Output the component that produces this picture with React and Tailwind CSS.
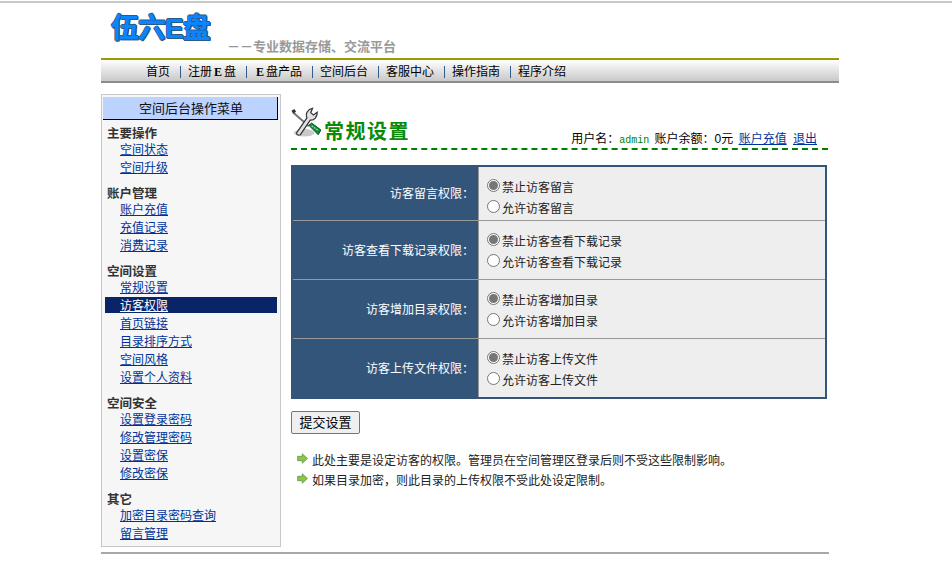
const cjk = "font-['Liberation_Sans','Noto_Sans_CJK_SC',sans-serif]";

const nav = ["首页", "注册E盘", "E盘产品", "空间后台", "客服中心", "操作指南", "程序介绍"];
const menu = [
  ["主要操作", ["空间状态", "空间升级"]],
  ["账户管理", ["账户充值", "充值记录", "消费记录"]],
  ["空间设置", ["常规设置", "访客权限", "首页链接", "目录排序方式", "空间风格", "设置个人资料"]],
  ["空间安全", ["设置登录密码", "修改管理密码", "设置密保", "修改密保"]],
  ["其它", ["加密目录密码查询", "留言管理"]],
];
const rows = [
  ["访客留言权限：", "访客留言", "h-[53px]", "pt-[9px]", ""],
  ["访客查看下载记录权限：", "访客查看下载记录", "h-[59px]", "pt-[5px]", "pt-[2px]"],
  ["访客增加目录权限：", "访客增加目录", "h-[59px]", "pt-[5px]", "pt-[2px]"],
  ["访客上传文件权限：", "访客上传文件", "h-[59px]", "pt-[5px]", "pt-[2px]"],
];

function NavLabel({ t }) {
  return t.split("E").map((p, i) => (
    <span key={i}>
      {i > 0 && <b className="inline-block w-[12px] text-center font-['Liberation_Serif'] font-bold">E</b>}
      {p}
    </span>
  ));
}

function Radio({ on }) {
  return (
    <span className="w-[13px] h-[13px] rounded-full border border-[#767676] bg-white flex items-center justify-center shrink-0 mr-[2px] -mt-[5px]">
      {on && <span className="w-[9px] h-[9px] rounded-full bg-[#767676]" />}
    </span>
  );
}

function Tool() {
  return (
    <svg width="30" height="31" viewBox="0 0 32 32" className="shrink-0 mb-[6px]">
      <ellipse cx="14" cy="27" rx="11" ry="4" fill="#c9c9c9" />
      <path d="M2 5 L19 20" stroke="#777" strokeWidth="2.2" />
      <path d="M0.5 3.5l3-2 2 3-3 2z" fill="#333" />
      <path d="M6 27 L17 11 C15 6 18 2 23 1 L21 5.5 L24 8 L28 5 C28 10 25 14 20.5 13.5 L10 29 C8 30 5.5 29 6 27 Z" fill="#e2e2e2" stroke="#333" strokeWidth="1.3" />
      <path d="M19 19 L22 16.5 L32 24 L29 29 Z" fill="#138a3a" stroke="#0a4d1c" strokeWidth="1" />
      <path d="M22 19.5l7 5" stroke="#9fe8b0" strokeWidth="1.2" strokeDasharray="2 1" />
    </svg>
  );
}

function Arrow() {
  return (
    <svg width="11" height="11" viewBox="0 0 11 11" className="shrink-0 -mt-[5px]">
      <path d="M0.7 3.3h4.6V0.8L10.4 5.5 5.3 10.2V7.7H0.7z" fill="#8fc63f" stroke="#5f8f55" strokeWidth="0.8" />
    </svg>
  );
}

export default function App() {
  return (
    <div className={`h-[567px] w-[952px] overflow-hidden bg-white text-[12px] text-[#222] ${cjk}`}>
      <div className="h-[3px] border-t-2 border-[#c8c8c8] mt-[1px]" />
      <div className="w-[738px] ml-[101px]">
        <div className="h-[54px] flex items-start pl-[10px]">
          <div className="text-[28px] leading-[36px] font-bold text-[#0a84ff] mt-[7px] w-[116px] whitespace-nowrap tracking-[-1px] [text-shadow:1px_1px_0_#2b5a85,-1px_0_0_#2b5a85,0_-1px_0_#2b5a85,1px_0_0_#2b5a85,0_1px_0_#2b5a85]">
            伍六E盘
          </div>
          <div className="mt-[35px] text-[13px] leading-[16px] font-bold text-[#999] whitespace-nowrap">－－专业数据存储、交流平台</div>
        </div>
        <div className="h-[25px] pt-[3px] border-t-2 border-b-2 border-t-[#999900] border-b-[#8c8c8c] bg-gradient-to-b from-white to-[#c9c9c9] flex items-center pl-[45px]">
          {nav.map((n, i) => (
            <div key={n} className="flex items-center">
              {i > 0 && <span className="w-px h-[12px] bg-[#2f5d8c] ml-[10px] mr-[7px]" />}
              <span className="text-black whitespace-nowrap"><NavLabel t={n} /></span>
            </div>
          ))}
        </div>
      </div>

      <div className="flex ml-[101px] mt-[11px]">
        <aside className="w-[180px] h-[453px] border border-[#c8c8c8] bg-[#f6f6f6] pt-[2px] pl-[1px] shrink-0">
          <div className="w-[175px] h-[23px] border-r border-b border-black bg-[#bcd2ff] text-center text-[#111] text-[13px] leading-[24px] pl-[2px]">空间后台操作菜单</div>
          <div className="pt-[6px]">
            {menu.map(([h, items]) => (
              <div key={h} className="mb-[9px]">
                <div className="pl-[4px] h-[15px] font-bold text-[#333] leading-[16px] text-[12.5px]">{h}</div>
                {items.map((it) => (
                  <div key={it} className="h-[18px]">
                    <div className={`h-[16px] leading-[18px] pl-[15px] w-[172px] ml-[2px] ${it === "访客权限" ? "bg-[#0a2468]" : ""}`}>
                      <a className={`underline ${it === "访客权限" ? "text-white" : "text-[#003399]"}`}>{it}</a>
                    </div>
                  </div>
                ))}
              </div>
            ))}
          </div>
        </aside>

        <main className="ml-[10px] w-[538px]">
          <div className="h-[56px] w-[537px] border-b-2 border-dashed border-[#008000] flex items-end">
            <div className="flex items-end pb-[4px]">
              <Tool />
              <span className="text-[20px] leading-[24px] font-bold text-[#0a8a0a] ml-[3px] tracking-[1.5px]">常规设置</span>
            </div>
            <div className="ml-auto pr-[11px] whitespace-nowrap text-black leading-[14px]">
              用户名：<span className="font-['Liberation_Mono'] text-[#008000] text-[10px] mr-[2px]">admin</span> 账户余额：0元 <a className="underline text-[#003399] ml-[2px]">账户充值</a> <a className="underline text-[#003399] ml-[3px]">退出</a>
            </div>
          </div>

          <div className="mt-[15px] w-[536px] border-2 border-[#33557a] bg-[#33557a]">
            {rows.map(([label, t, h, pt, lpt], i) => (
              <div key={t} className={`flex ${h} ${i > 0 ? "border-t border-[#999]" : ""}`}>
                <div className={`w-[185px] flex items-center justify-end pr-[4px] text-white ${lpt}`}>{label}</div>
                <div className={`flex-1 bg-[#eeeeee] border-l border-[#999] pl-[8px] flex flex-col justify-center gap-[5px] text-[#222] ${pt}`}>
                  <label className="flex items-center h-[16px] leading-[16px]"><Radio on />禁止{t}</label>
                  <label className="flex items-center h-[16px] leading-[16px]"><Radio />允许{t}</label>
                </div>
              </div>
            ))}
          </div>

          <button className="mt-[12px] w-[69px] h-[23px] border border-[#767676] rounded-[2px] bg-[#efefef] text-[13px] text-black leading-none">提交设置</button>

          <div className="mt-[17px] pl-[6px] text-[#222]">
            <div className="flex items-center gap-[4px] h-[20px]"><Arrow />此处主要是设定访客的权限。管理员在空间管理区登录后则不受这些限制影响。</div>
            <div className="flex items-center gap-[4px] h-[20px]"><Arrow />如果目录加密，则此目录的上传权限不受此处设定限制。</div>
          </div>
        </main>
      </div>
      <div className="w-[728px] ml-[101px] mt-[5px] border-t-2 border-[#a8a8a8]" />
    </div>
  );
}
